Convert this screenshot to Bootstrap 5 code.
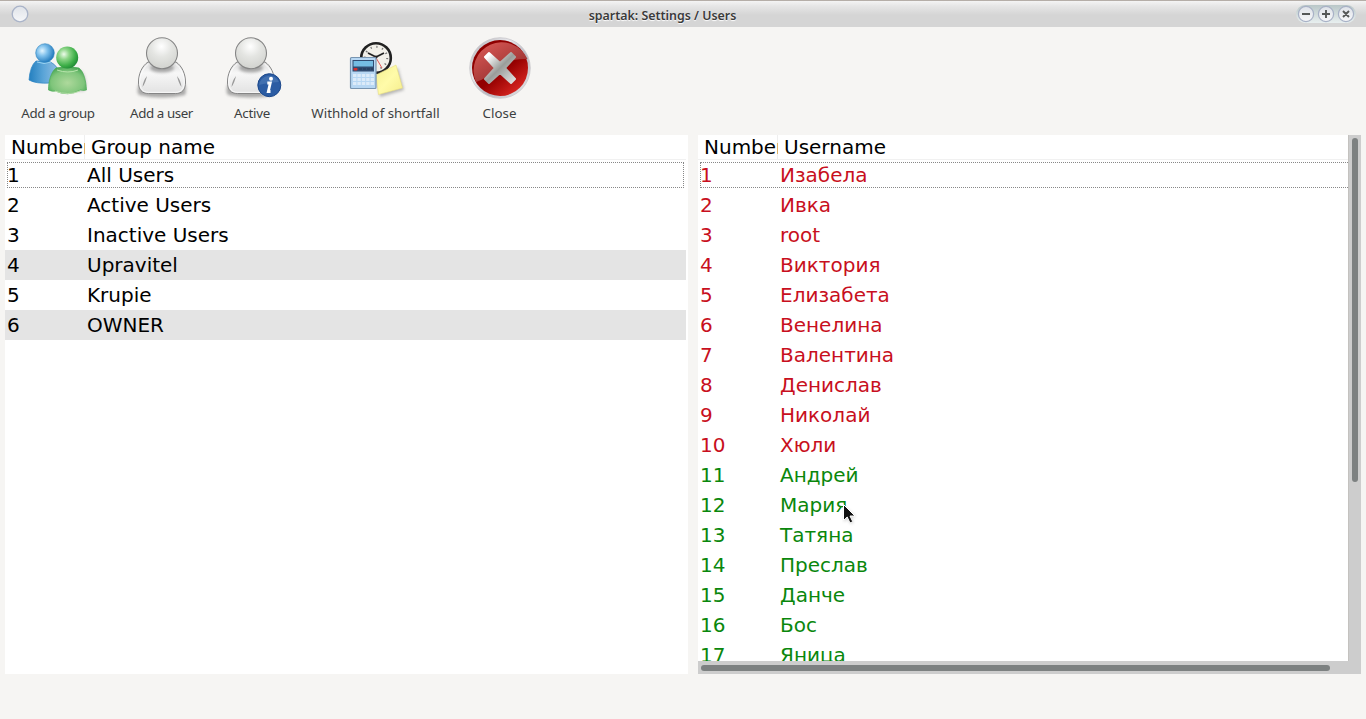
<!DOCTYPE html>
<html lang="en">
<head>
<meta charset="utf-8">
<title>spartak: Settings / Users</title>
<link href="https://cdn.jsdelivr.net/npm/bootstrap@5.3.0/dist/css/bootstrap.min.css" rel="stylesheet">
<style>
body{width:1366px;height:719px;background:#f6f5f3;font-family:"Noto Sans",sans-serif;color:#3c3c3c}
.titlebar{height:27px;border-top:1px solid #b5aea8;background:linear-gradient(#f4f4f4 0,#e6e6e6 5px,#d5d5d5 14px,#d5d5d5 100%)}
.win-title{font-size:12.400px;font-weight:600;line-height:27px;padding:1px 41px 0 0;text-shadow:0 1px 1px #fff;color:#3a3a3a}
.win-dot{left:11px;top:4px}
.win-buttons{right:10px;top:4px;width:60px;height:18px;border-radius:9px;background:linear-gradient(#b9c7c8,#e8efef)}
.toolbar{height:108px;padding:9px 0 0 8px}
.tool{color:#3c3f41;font-size:13.33px;line-height:18px}
.tool svg{width:64px;height:64px;margin-bottom:4px}
.w1{width:100px;letter-spacing:-.36px}.w2{width:107px;letter-spacing:-.4px}.w3{width:74px;letter-spacing:-.25px}.w4{width:173px}.w5{width:75px}
.panes{height:539px;padding:0 5px;gap:10px;font-family:"DejaVu Sans",sans-serif;font-size:20px;color:#000}
.pane-left{width:683px;padding-right:2px}
.pane-right{width:663px;background:#cdcdcd}
.list-view{width:650px;height:526px}
.head-row{height:25px;line-height:24px;border-bottom:1px solid #f1f1f1}
.head-row>div{white-space:nowrap;overflow:hidden}
.head-row>div:first-child{width:80px;padding-left:6px;background:linear-gradient(#efefef,#efefef) right/1px 100% no-repeat}
.head-row>div:last-child{padding-left:6px}
.list-row{height:30px;line-height:31px}
.list-row .num{width:80px;padding-left:2px}
.list-row .label-text{padding-left:2px}
.shaded{background:#e4e4e4}
.focus-box{inset:2px;border:1px dotted #888}
.open-end{right:0;border-right:0}
.off{color:#c80f20}.on{color:#0a870c}
.vbar{width:13px;height:526px;padding:3px 3px 0 3px;border-left:1px solid #c4c2bf}
.vthumb{width:6px;height:344px;border-radius:3px;background:#7d8181}
.hbar{height:13px;padding:4px 0 0 3px}
.hthumb{width:629px;height:6px;border-radius:3px;background:#7d8181}
.pointer{left:842px;top:503px}
</style>
<script src="https://cdn.jsdelivr.net/npm/bootstrap@5.3.0/dist/js/bootstrap.bundle.min.js"></script>
</head>
<body class="position-relative overflow-hidden m-0">
<svg width="0" height="0" class="position-absolute">
<defs>
<radialGradient id="blueHead" cx=".35" cy=".38" r=".7"><stop stop-color="#e2f5ff"/><stop offset=".4" stop-color="#80c1ec"/><stop offset="1" stop-color="#1873b8"/></radialGradient>
<linearGradient id="blueBody"><stop stop-color="#237fbf"/><stop offset=".5" stop-color="#5ba5d8"/><stop offset="1" stop-color="#91bee3"/></linearGradient>
<radialGradient id="greenHead" cx=".35" cy=".35" r=".7"><stop stop-color="#edfbea"/><stop offset=".35" stop-color="#8bd486"/><stop offset=".75" stop-color="#3cae47"/><stop offset="1" stop-color="#218b36"/></radialGradient>
<radialGradient id="greenBody" cx=".5" cy=".6" r=".65"><stop stop-color="#aed99c"/><stop offset=".65" stop-color="#7fc57b"/><stop offset="1" stop-color="#3b9f4b"/></radialGradient>
<radialGradient id="greyHead" cx=".48" cy=".28" r=".75"><stop stop-color="#fff"/><stop offset=".45" stop-color="#e4e5e2"/><stop offset="1" stop-color="#d0d1cd"/></radialGradient>
<linearGradient id="greyBody" x2="0" y2="1"><stop stop-color="#ddd"/><stop offset=".35" stop-color="#f7f7f7"/><stop offset="1" stop-color="#e2e2e2"/></linearGradient>
<linearGradient id="redDisc" x2=".8" y2="1"><stop stop-color="#8b0000"/><stop offset=".6" stop-color="#930000"/><stop offset="1" stop-color="#e02a25"/></linearGradient>
<linearGradient id="redGloss" x2=".8" y2="1"><stop stop-color="#df5c58"/><stop offset="1" stop-color="#8d2a2a"/></linearGradient>
<linearGradient id="rim" x2="1" y2="1"><stop stop-color="#aaa9af"/><stop offset=".35" stop-color="#e9e9ed"/><stop offset=".6" stop-color="#b8b7bf"/><stop offset="1" stop-color="#eee"/></linearGradient>
<linearGradient id="cross" x2="1" y2="1"><stop offset=".1" stop-color="#fff"/><stop offset=".5" stop-color="#9a9d9a"/><stop offset="1" stop-color="#e5e5e5"/></linearGradient>
<linearGradient id="knob" x2="0" y2="1"><stop stop-color="#dfe3e9"/><stop offset="1" stop-color="#f6f7f9"/></linearGradient>
<linearGradient id="note" x2="1" y2="1"><stop stop-color="#f4ef91"/><stop offset=".5" stop-color="#fffba9"/><stop offset="1" stop-color="#f5ed8c"/></linearGradient>
<filter id="soft" x="-30%" y="-30%" width="160%" height="160%"><feGaussianBlur stdDeviation="1.4"/></filter>
<symbol id="person" viewBox="0 0 64 64">
<path d="M9 48q-3 8 0 11 23 5 46 0 2-4 0-11Z" fill="#777" opacity=".6" filter="url(#soft)"/>
<path d="M18 26C12 30 8.500 38 8.500 46c0 8 3.500 11.500 10 11.500h27c6.500 0 10-3.500 10-11.500C55.500 38 52 30 46 26Z" fill="url(#greyBody)" stroke="#858585"/>
<path d="M18.500 28C13 32 9.700 39 9.700 46c0 7 3.300 10.300 9 10.300h26.600c5.700 0 9-3.300 9-10.300C54.300 39 51 32 45.500 28" fill="none" stroke="#fff" opacity=".8"/>
<path d="M17 40q-4 5-4.500 11 3-4 4.500-11M47 40q4 5 4.500 11-3-4-4.500-11" fill="#999"/>
<ellipse cx="32" cy="32" rx="12" ry="4.500" fill="#777" opacity=".6" filter="url(#soft)"/>
<circle cx="32" cy="17.300" r="15.500" fill="url(#greyHead)" stroke="#858585" stroke-width="1.100"/>
</symbol>
</defs>
</svg>

<header class="titlebar position-relative text-center">
<svg class="win-dot position-absolute" width="18" height="18"><circle cx="9" cy="9" r="7.800" fill="url(#knob)" stroke="#a9b3c8" stroke-width="1.300"/></svg>
<div class="win-title">spartak: Settings / Users</div>
<div class="win-buttons position-absolute d-flex">
<svg width="60" height="18" fill="none"><g fill="url(#knob)" stroke="#a8b1c6" stroke-width="1.200"><circle cx="10" cy="9" r="7.600"/><circle cx="30" cy="9" r="7.600"/><circle cx="50" cy="9" r="7.600"/></g><path d="M6 9h8M26 9h8M30 5v8M47 6l6 6M53 6l-6 6" stroke="#555857" stroke-width="1.900"/></svg>
</div>
</header>

<nav class="toolbar d-flex">
<div class="tool w1 d-flex flex-column align-items-center">
<svg viewBox="0 0 64 64"><path d="M50 34q9-1 10 15l-2 6H48Z" fill="#777" opacity=".45" filter="url(#soft)"/>
<path d="M10 25Q4 30 3 44q7 4 21 3l8-14q-3-5-9-8Z" fill="url(#blueBody)" stroke="#2f85c3" stroke-width=".7"/><path d="M11 26q7 3 14 0" stroke="#9ad4f2" fill="none"/>
<circle cx="19" cy="17" r="9.300" fill="url(#blueHead)" stroke="#2c83bf" stroke-width=".6"/>
<path d="M30 32q12-3 23 0c5 4 7 13 7.500 22-4 1-5 0-6 0q-13 7-25 1-3 1-7-1c0-9 2.500-18 7.500-22" fill="url(#greenBody)" stroke="#4aaa55" stroke-width=".7"/><path d="M31 34q11 4 21 0" fill="none" stroke="#b8e5ac"/><path d="M29 55q13 5 25 0" stroke="#b8dfaa" fill="none"/>
<circle cx="41.200" cy="21.500" r="11" fill="url(#greenHead)"/></svg>
<span>Add a group</span></div>
<div class="tool w2 d-flex flex-column align-items-center"><svg><use href="#person"/></svg><span>Add a user</span></div>
<div class="tool w3 d-flex flex-column align-items-center">
<svg viewBox="0 0 64 64"><use href="#person" x="-1"/><circle cx="49.300" cy="49.200" r="12" fill="#fff" opacity=".8"/><circle cx="49.300" cy="49.200" r="11.500" fill="#2b5ca3" stroke="#1b4789"/><path d="M39 49a10.500 10.500 0 0 1 20-3q-12 1-20 3" fill="#5783bd" opacity=".5"/><circle cx="51" cy="42.800" r="2" fill="#fff"/><path d="M47.300 47h3l-2 8.500h2.200" fill="none" stroke="#fff" stroke-width="2.800"/></svg>
<span>Active</span></div>
<div class="tool w4 d-flex flex-column align-items-center">
<svg viewBox="0 0 64 64">
<circle cx="32" cy="22" r="14.800" fill="#f2f0e9" stroke="#222" stroke-width="2.600"/><circle cx="32" cy="22" r="11.200" fill="none" stroke="#777" stroke-width="2" stroke-dasharray="1.200 4.664"/><path d="m24 17 8 4 8-4" fill="none" stroke="#222" stroke-width="1.700"/><path d="m31 20 7 12" stroke="#d33" stroke-width=".8"/><circle cx="32" cy="21" r="1.500" fill="#222"/>
<path d="m33 40 21-8 6 22-24 7Z" fill="#777" opacity=".5" filter="url(#soft)"/><path d="m32 39 20-10 6.500 23-24 6.500Z" fill="url(#note)" stroke="#eadf82" stroke-width=".6"/>
<rect x="6.500" y="21.500" width="25.500" height="31" rx="1" fill="#b7d7f3" stroke="#7895b1" stroke-width="1.200"/><rect x="8.500" y="24" width="21.500" height="11.500" fill="#304c71"/><rect x="9.500" y="25" width="19.500" height="5.500" fill="#75bde3"/><rect x="9.500" y="32" width="4" height="2.500" rx="1" fill="#d6302f"/><path d="M15 33h14" stroke="#203653" stroke-dasharray="3 1"/><path d="M9 39.500h21M9 43.500h21M9 47.500h21" stroke="#dcebf9" stroke-width="2.800" stroke-dasharray="3.400 1"/></svg>
<span>Withhold of shortfall</span></div>
<div class="tool w5 d-flex flex-column align-items-center">
<svg viewBox="0 0 64 64"><circle cx="32" cy="32" r="30.300" fill="url(#rim)" stroke="#c9c8cc" stroke-width=".8"/><circle cx="32" cy="32" r="28" fill="url(#redDisc)"/><path d="M8 46A28 28 0 1 1 59.500 23Q42 22 31 31 20 42 8 46" fill="url(#redGloss)"/><path d="M21 17 32 27 43 17 47 21 37 32 47 43 43 47 32 37 21 47 17 43 27 32 17 21Z" fill="url(#cross)" stroke="url(#cross)" stroke-width="2" stroke-linejoin="round"/></svg>
<span>Close</span></div>
</nav>

<main class="panes d-flex">
<section class="pane-left bg-white">
<div class="head-row d-flex"><div>Number</div><div class="flex-grow-1">Group name</div></div>
<div class="list-row d-flex position-relative"><span class="num">1</span><span class="label-text">All Users</span><i class="focus-box position-absolute"></i></div>
<div class="list-row d-flex"><span class="num">2</span><span class="label-text">Active Users</span></div>
<div class="list-row d-flex"><span class="num">3</span><span class="label-text">Inactive Users</span></div>
<div class="list-row d-flex shaded"><span class="num">4</span><span class="label-text">Upravitel</span></div>
<div class="list-row d-flex"><span class="num">5</span><span class="label-text">Krupie</span></div>
<div class="list-row d-flex shaded"><span class="num">6</span><span class="label-text">OWNER</span></div>
</section>
<section class="pane-right">
<div class="d-flex">
<div class="list-view bg-white overflow-hidden">
<div class="head-row d-flex"><div>Number</div><div class="flex-grow-1">Username</div></div>
<div class="list-row d-flex off position-relative"><span class="num">1</span><span class="label-text">Изабела</span><i class="focus-box open-end position-absolute"></i></div>
<div class="list-row d-flex off"><span class="num">2</span><span class="label-text">Ивка</span></div>
<div class="list-row d-flex off"><span class="num">3</span><span class="label-text">root</span></div>
<div class="list-row d-flex off"><span class="num">4</span><span class="label-text">Виктория</span></div>
<div class="list-row d-flex off"><span class="num">5</span><span class="label-text">Елизабета</span></div>
<div class="list-row d-flex off"><span class="num">6</span><span class="label-text">Венелина</span></div>
<div class="list-row d-flex off"><span class="num">7</span><span class="label-text">Валентина</span></div>
<div class="list-row d-flex off"><span class="num">8</span><span class="label-text">Денислав</span></div>
<div class="list-row d-flex off"><span class="num">9</span><span class="label-text">Николай</span></div>
<div class="list-row d-flex off"><span class="num">10</span><span class="label-text">Хюли</span></div>
<div class="list-row d-flex on"><span class="num">11</span><span class="label-text">Андрей</span></div>
<div class="list-row d-flex on"><span class="num">12</span><span class="label-text">Мария</span></div>
<div class="list-row d-flex on"><span class="num">13</span><span class="label-text">Татяна</span></div>
<div class="list-row d-flex on"><span class="num">14</span><span class="label-text">Преслав</span></div>
<div class="list-row d-flex on"><span class="num">15</span><span class="label-text">Данче</span></div>
<div class="list-row d-flex on"><span class="num">16</span><span class="label-text">Бос</span></div>
<div class="list-row d-flex on"><span class="num">17</span><span class="label-text">Яница</span></div>
</div>
<div class="vbar"><div class="vthumb"></div></div>
</div>
<div class="hbar"><div class="hthumb"></div></div>
</section>
</main>
<svg class="pointer position-absolute" width="16" height="24"><path d="M2 3v16l4-3.500 2.500 5.500 3-1.500L9 14h5Z" fill="#777" opacity=".35" filter="url(#soft)"/><path d="M1.500 1.500v16l3.700-3.500 2.800 6 2.800-1.300L8 13h5Z" fill="#111" stroke="#fff"/></svg>
</body>
</html>
